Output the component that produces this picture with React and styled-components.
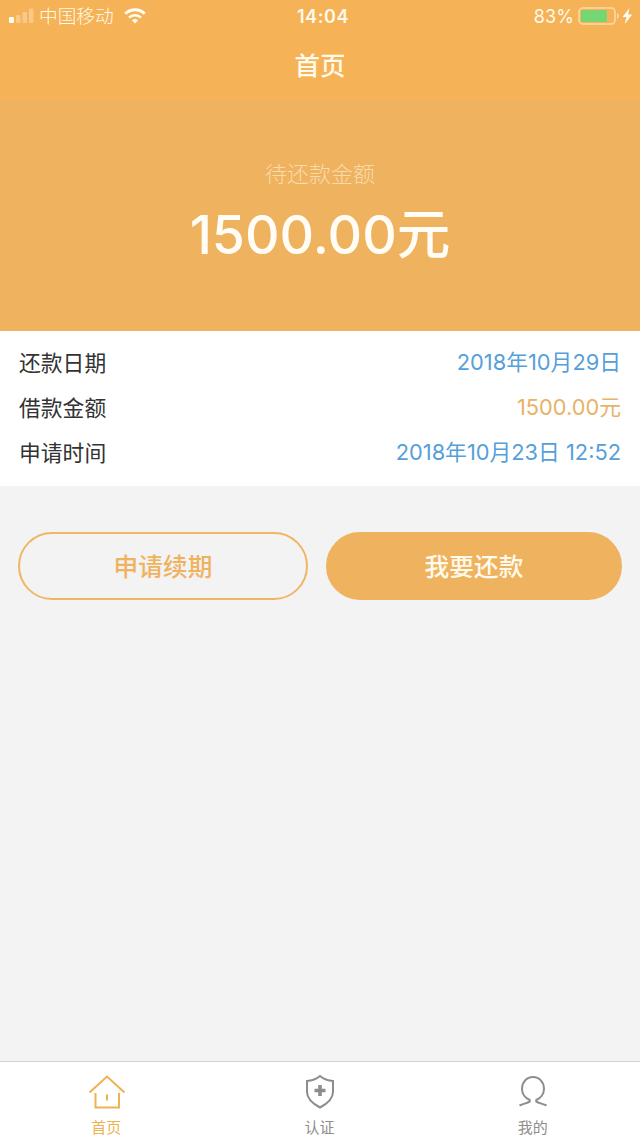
import React from "react";
import styled, { createGlobalStyle } from "styled-components";

const records = [
  { label: "还款日期", value: "2018年10月29日", color: "#559fda" },
  { label: "借款金额", value: "1500.00元", color: "#e9b265" },
  { label: "申请时间", value: "2018年10月23日 12:52", color: "#559fda" },
];

function SignalIcon() {
  return (
    <svg width="26" height="16" viewBox="0 0 26 16" fill="#fffdf0">
      <rect x="1" y="9" width="5" height="6" rx="1.2" />
      <rect x="8" y="7" width="4.5" height="8" rx="1" opacity="0.32" />
      <rect x="14.5" y="4" width="4.5" height="11" rx="1" opacity="0.32" />
      <rect x="21" y="0.5" width="4.5" height="14.5" rx="1" opacity="0.32" />
    </svg>
  );
}

function WifiIcon() {
  return (
    <svg width="22" height="16" viewBox="0 0 22 16" fill="none" stroke="#fffdf5">
      <path d="M1.3 5.7a13.8 13.8 0 0 1 19.4 0" strokeWidth="3" />
      <path d="M5 9.7a8.5 8.5 0 0 1 12 0" strokeWidth="2.6" />
      <path d="M11 15.5l-3-3a4.3 4.3 0 0 1 6 0z" fill="#fffdf5" stroke="none" />
    </svg>
  );
}

function BatteryIcon() {
  return (
    <svg width="55" height="18" viewBox="0 0 55 18">
      <rect x="1" y="1" width="36" height="16" rx="4" fill="none" stroke="#fadba6" strokeWidth="1.6" />
      <rect x="3" y="3" width="26" height="12" rx="1.5" fill="#75d672" />
      <path d="M39 6v6c2.4-1 2.4-5 0-6z" fill="#fadba6" />
      <path d="M51.5 1l-7 9h4l-1.8 7 7.6-9.5h-4.2z" fill="#fffdf5" />
    </svg>
  );
}

function HomeIcon() {
  return (
    <svg width="38" height="36" viewBox="0 0 38 36" fill="none" stroke="currentColor" strokeWidth="2">
      <path d="M1.5 18.5L19 2.5l17.5 16" />
      <path d="M7.5 19v14.5h23.500V19" />
      <path d="M19 20.500v6" />
    </svg>
  );
}

function ShieldIcon() {
  return (
    <svg width="38" height="36" viewBox="0 0 38 36" fill="none" stroke="currentColor" strokeWidth="2">
      <path d="M19 2c3.600 3 8 4.700 13 5v11c0 7-5.500 11.500-13 15.500C11.500 29.500 6 25 6 18V7c5-.3 9.400-2 13-5z" />
      <path d="M19 11v11M13.500 16.500h11" strokeWidth="3.600" />
    </svg>
  );
}

function UserIcon() {
  return (
    <svg width="38" height="36" viewBox="0 0 38 36" fill="none" stroke="currentColor" strokeWidth="2">
      <path d="M5.500 31.500c3.300-1.700 7.800-2.200 10.200-3.800V26C11 24 8 19.500 8 15 8 8 12.700 3 19 3s11 5 11 12c0 4.500-3 9-7.700 11v1.700c2.400 1.600 6.900 2.100 10.200 3.800" />
    </svg>
  );
}

function App() {
  return (
    <>
      <GlobalStyle />
      <Page>
        <StatusBar>
          <StatusLeft>
            <SignalIcon />
            <Carrier>中国移动</Carrier>
            <WifiIcon />
          </StatusLeft>
          <Clock>14:04</Clock>
          <StatusRight>
            <Percent>83%</Percent>
            <BatteryIcon />
          </StatusRight>
        </StatusBar>
        <NavBar>首页</NavBar>
        <Summary>
          <SummaryLabel>待还款金额</SummaryLabel>
          <Amount>1500.00元</Amount>
        </Summary>
        <RecordList>
          {records.map((record) => (
            <Record key={record.label}>
              <RecordLabel>{record.label}</RecordLabel>
              <RecordValue $color={record.color}>{record.value}</RecordValue>
            </Record>
          ))}
        </RecordList>
        <Actions>
          <OutlineButton type="button">申请续期</OutlineButton>
          <FilledButton type="button">我要还款</FilledButton>
        </Actions>
        <TabBar>
          <Tab type="button" $active>
            <HomeIcon />
            <span>首页</span>
          </Tab>
          <Tab type="button">
            <ShieldIcon />
            <span>认证</span>
          </Tab>
          <Tab type="button">
            <UserIcon />
            <span>我的</span>
          </Tab>
        </TabBar>
      </Page>
    </>
  );
}

export default App;

const GlobalStyle = createGlobalStyle`
  * {
    box-sizing: border-box;
  }

  body {
    margin: 0;
    font-family: Inter, "Noto Sans CJK SC", sans-serif;
  }

  svg {
    display: block;
    flex-shrink: 0;
  }

  button {
    padding: 0;
    border: 0;
    background: none;
    font-family: inherit;
  }
`;

const Page = styled.div`
  display: flex;
  flex-direction: column;
  width: 640px;
  height: 1138px;
  background: #f3f3f3;
  overflow: hidden;
`;

const StatusBar = styled.div`
  display: grid;
  grid-template-columns: 1fr auto 1fr;
  align-items: center;
  height: 32px;
  padding: 0 7px 0 8px;
  background: #f5b256;
  color: #fffaeb;
  line-height: 32px;
`;

const StatusLeft = styled.div`
  display: flex;
  align-items: center;
`;

const StatusRight = styled.div`
  display: flex;
  align-items: center;
  justify-content: flex-end;
  gap: 4px;
`;

const Carrier = styled.span`
  margin: 0 10px 0 5px;
  padding-top: 2px;
  font-size: 18.7px;
  font-weight: 300;
  line-height: 30px;
`;

const Clock = styled.span`
  padding: 2px 0 0 5px;
  font-size: 18px;
  font-weight: 600;
  letter-spacing: 0.6px;
  line-height: 30px;
`;

const Percent = styled.span`
  padding-top: 2px;
  font-size: 18px;
  letter-spacing: 0.1px;
  line-height: 30px;
`;

const NavBar = styled.div`
  height: 68px;
  background: #f5b256;
  color: #fffaeb;
  font-size: 25.5px;
  font-weight: 500;
  line-height: 68px;
  text-align: center;
`;

const Summary = styled.div`
  display: flex;
  flex-direction: column;
  align-items: center;
  height: 231px;
  padding-top: 58px;
  background: #efb25f;
`;

const SummaryLabel = styled.div`
  color: #f9dbac;
  font-size: 22px;
  font-weight: 300;
  line-height: 32px;
`;

const Amount = styled.div`
  color: #fffdf5;
  font-size: 53.6px;
  font-weight: 500;
  line-height: 70px;
  margin-top: 10px;
`;

const RecordList = styled.div`
  height: 155px;
  padding: 10px 19px 0;
  background: #fff;
`;

const Record = styled.div`
  display: flex;
  justify-content: space-between;
  height: 45px;
  line-height: 45px;
`;

const RecordLabel = styled.span`
  color: #333;
  font-size: 21.8px;
`;

const RecordValue = styled.span`
  color: ${({ $color }) => $color};
  font-size: 21.8px;
  line-height: 43px;
`;

const Actions = styled.div`
  display: flex;
  gap: 18px;
  padding: 46px 18px 0;
`;

const OutlineButton = styled.button`
  width: 290px;
  height: 68px;
  padding-bottom: 2px;
  border: 2px solid #efb665;
  border-radius: 34px;
  color: #efb25f;
  font-size: 24.7px;
  font-weight: 500;
`;

const FilledButton = styled(OutlineButton)`
  width: 296px;
  border-color: #efb25f;
  background: #efb25f;
  color: #fffaeb;
`;

const TabBar = styled.div`
  display: grid;
  grid-template-columns: repeat(3, 1fr);
  height: 77px;
  margin-top: auto;
  border-top: 1px solid #d3d3d3;
  background: #fff;
`;

const Tab = styled.button`
  display: flex;
  flex-direction: column;
  align-items: center;
  padding-top: 12px;
  color: ${({ $active }) => ($active ? "#efb250" : "#8d8d8d")};
  font-size: 15px;
  line-height: 22px;

  span {
    margin-top: 7px;
    padding-right: 1px;
  }
`;
